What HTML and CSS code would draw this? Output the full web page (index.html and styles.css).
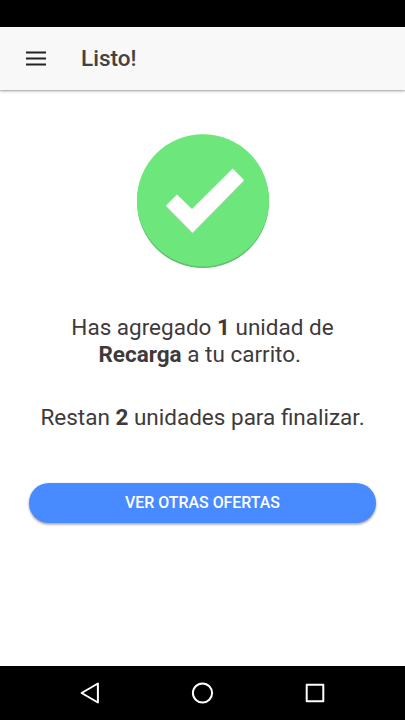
FILE: index.html
```html
<!DOCTYPE html>
<html lang="es">
<head>
<meta charset="UTF-8">
<meta name="viewport" content="width=device-width, initial-scale=1">
<title>Listo!</title>
<link rel="stylesheet" href="styles.css">
</head>
<body>

<div class="status-bar"></div>

<header class="toolbar">
  <button class="menu-button" aria-label="Menú">
    <svg width="20" height="15" viewBox="0 0 20 15">
      <path d="M0 1.400h20M0 7.400h20M0 13.400h20" stroke="#222" stroke-width="2"/>
    </svg>
  </button>
  <h1 class="title">Listo!</h1>
</header>

<main class="content">
  <svg class="check" width="134" height="136" viewBox="0 0 134 136">
    <circle cx="67" cy="69" r="66" fill="#5fbf6c"/>
    <circle cx="67" cy="67.300" r="66.100" fill="#6de67b"/>
    <path d="M30 73.500L41 62.500L56 77L96.700 36.500L108 48L56.500 100.500Z" fill="#cfd8d0"/>
    <path d="M30 72.500L41 61.500L56 76L96.700 35.500L108 47L56.500 99.500Z" fill="#fff"/>
  </svg>

  <p class="message">Has agregado <strong>1</strong> unidad de <br><strong>Recarga</strong> a tu carrito.&nbsp;</p>
  <p class="message">Restan <strong>2</strong> unidades para finalizar.</p>

  <button class="offers-button">Ver otras ofertas</button>
</main>

<!-- Botones de Android -->
<nav class="nav-bar">
  <svg width="24" height="24" viewBox="0 0 24 24"><path d="M19.900 2.500V21.500L3.600 12Z"/></svg>
  <svg width="24" height="24" viewBox="0 0 24 24"><circle cx="11.500" cy="12" r="9.600"/></svg>
  <svg width="24" height="24" viewBox="0 0 24 24"><rect x="3.700" y="3.700" width="16.600" height="16.600"/></svg>
</nav>

</body>
</html>
```
FILE: styles.css
```css
* {
  box-sizing: border-box;
}

body {
  display: flex;
  flex-direction: column;
  height: 100vh;
  margin: 0;
  background-color: #fff;
  font-family: Roboto, "Helvetica Neue", sans-serif;
  overflow: hidden;
}

.status-bar {
  height: 27px;
  background-color: #000;
}

.toolbar {
  display: flex;
  align-items: center;
  gap: 35px;
  height: 63px;
  padding-left: 26px;
  background-color: #f8f8f8;
  box-shadow: 0 1px 3px rgba(0, 0, 0, 0.3), 0 1px 1px rgba(0, 0, 0, 0.1);
}

.menu-button {
  display: flex;
  padding: 0;
  border: 0;
  background: none;
}

.title {
  margin: 0;
  font-size: 22.5px;
  font-weight: 500;
  line-height: 27px;
  color: #424242;
}

.content {
  flex: 1;
  display: flex;
  flex-direction: column;
  align-items: center;
  padding: 43px 29px 0;
}

.check {
  margin-bottom: 45px;
}

.message {
  margin: 0 0 36px;
  font-size: 22.5px;
  line-height: 27px;
  text-align: center;
  white-space: nowrap;
  color: #3e3a3b;
}

.offers-button {
  width: 100%;
  height: 40px;
  margin-top: 16px;
  padding: 0 0 2px;
  border: 0;
  border-radius: 20px;
  background-color: #488aff;
  box-shadow: 0 2px 2px rgba(0, 0, 0, 0.16), 0 1px 3px rgba(0, 0, 0, 0.25);
  font-family: inherit;
  font-size: 15.9px;
  font-weight: 500;
  text-transform: uppercase;
  color: #fff;
}

.nav-bar {
  display: flex;
  justify-content: space-between;
  align-items: center;
  height: 54px;
  padding: 0 78px;
  background-color: #000;
}

.nav-bar svg {
  fill: none;
  stroke: #fff;
  stroke-width: 2;
  stroke-linejoin: round;
}
```
